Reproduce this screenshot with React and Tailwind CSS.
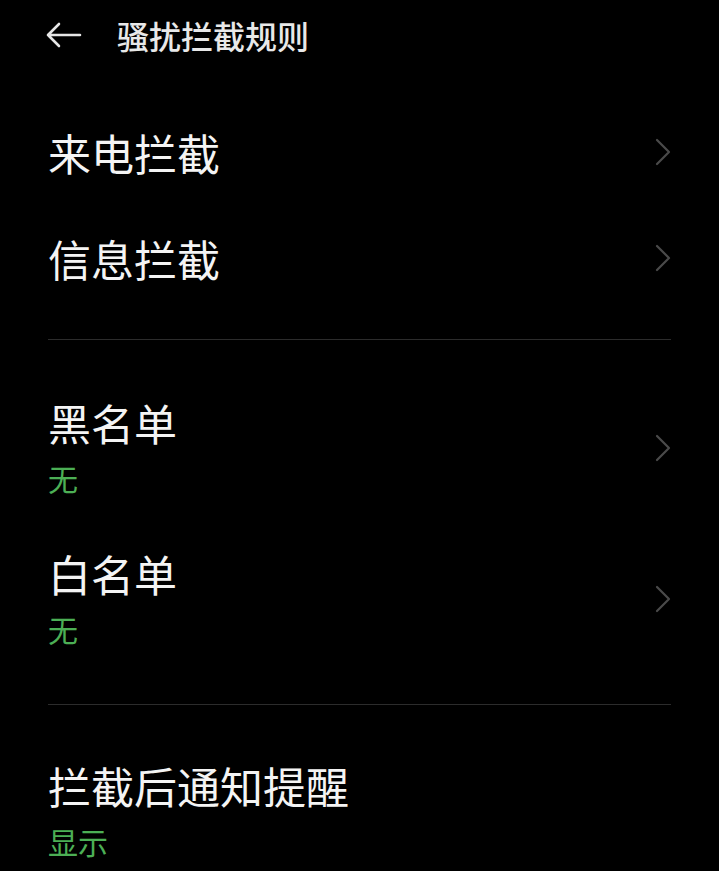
const font = { fontFamily: '"Noto Sans CJK SC", "Noto Sans", sans-serif' };

function Chevron() {
  return (
    <svg width="16" height="28" viewBox="0 0 16 28" fill="none" className="shrink-0">
      <path d="M2 2 L14 14 L2 26" stroke="#4a4a4a" strokeWidth="2.2" strokeLinecap="round" strokeLinejoin="round" />
    </svg>
  );
}

function BackArrow() {
  return (
    <svg width="38" height="26" viewBox="0 0 38 26" fill="none" className="shrink-0">
      <path d="M3 13 H35 M14 2 L3 13 L14 24" stroke="#e6e6e6" strokeWidth="2.6" strokeLinecap="round" strokeLinejoin="round" />
    </svg>
  );
}

function SimpleRow({ title }) {
  return (
    <div className="h-[106px] flex items-center justify-between">
      <span className="text-[43px] leading-[50px] text-[#f4f4f4]">{title}</span>
      <Chevron />
    </div>
  );
}

function DetailRow({ title, value, arrow = true, className = "" }) {
  return (
    <div className={"flex items-center justify-between " + className}>
      <div className="flex flex-col gap-[11px]">
        <span className="text-[43px] leading-[50px] text-[#f4f4f4]">{title}</span>
        <span className="text-[30px] leading-[40px] text-[#4caf55]">{value}</span>
      </div>
      {arrow && <Chevron />}
    </div>
  );
}

export default function App() {
  return (
    <div className="w-[719px] h-[871px] bg-black overflow-hidden" style={font}>
      <div className="h-[70px] flex items-center pl-[45px]">
        <BackArrow />
        <span className="ml-[34px] text-[32px] font-medium text-[#e8e8e8]">骚扰拦截规则</span>
      </div>

      <div className="px-[48px] pt-[29px]">
        <SimpleRow title="来电拦截" />
        <SimpleRow title="信息拦截" />

        <div className="mt-[28px] h-px bg-[#2c2c2c]" />

        <DetailRow title="黑名单" value="无" className="pt-[57px] pb-[25px]" />
        <DetailRow title="白名单" value="无" className="pt-[25px] pb-[27px]" />

        <div className="mt-[28px] h-px bg-[#2c2c2c]" />

        <DetailRow title="拦截后通知提醒" value="显示" arrow={false} className="pt-[55px]" />
      </div>
    </div>
  );
}
